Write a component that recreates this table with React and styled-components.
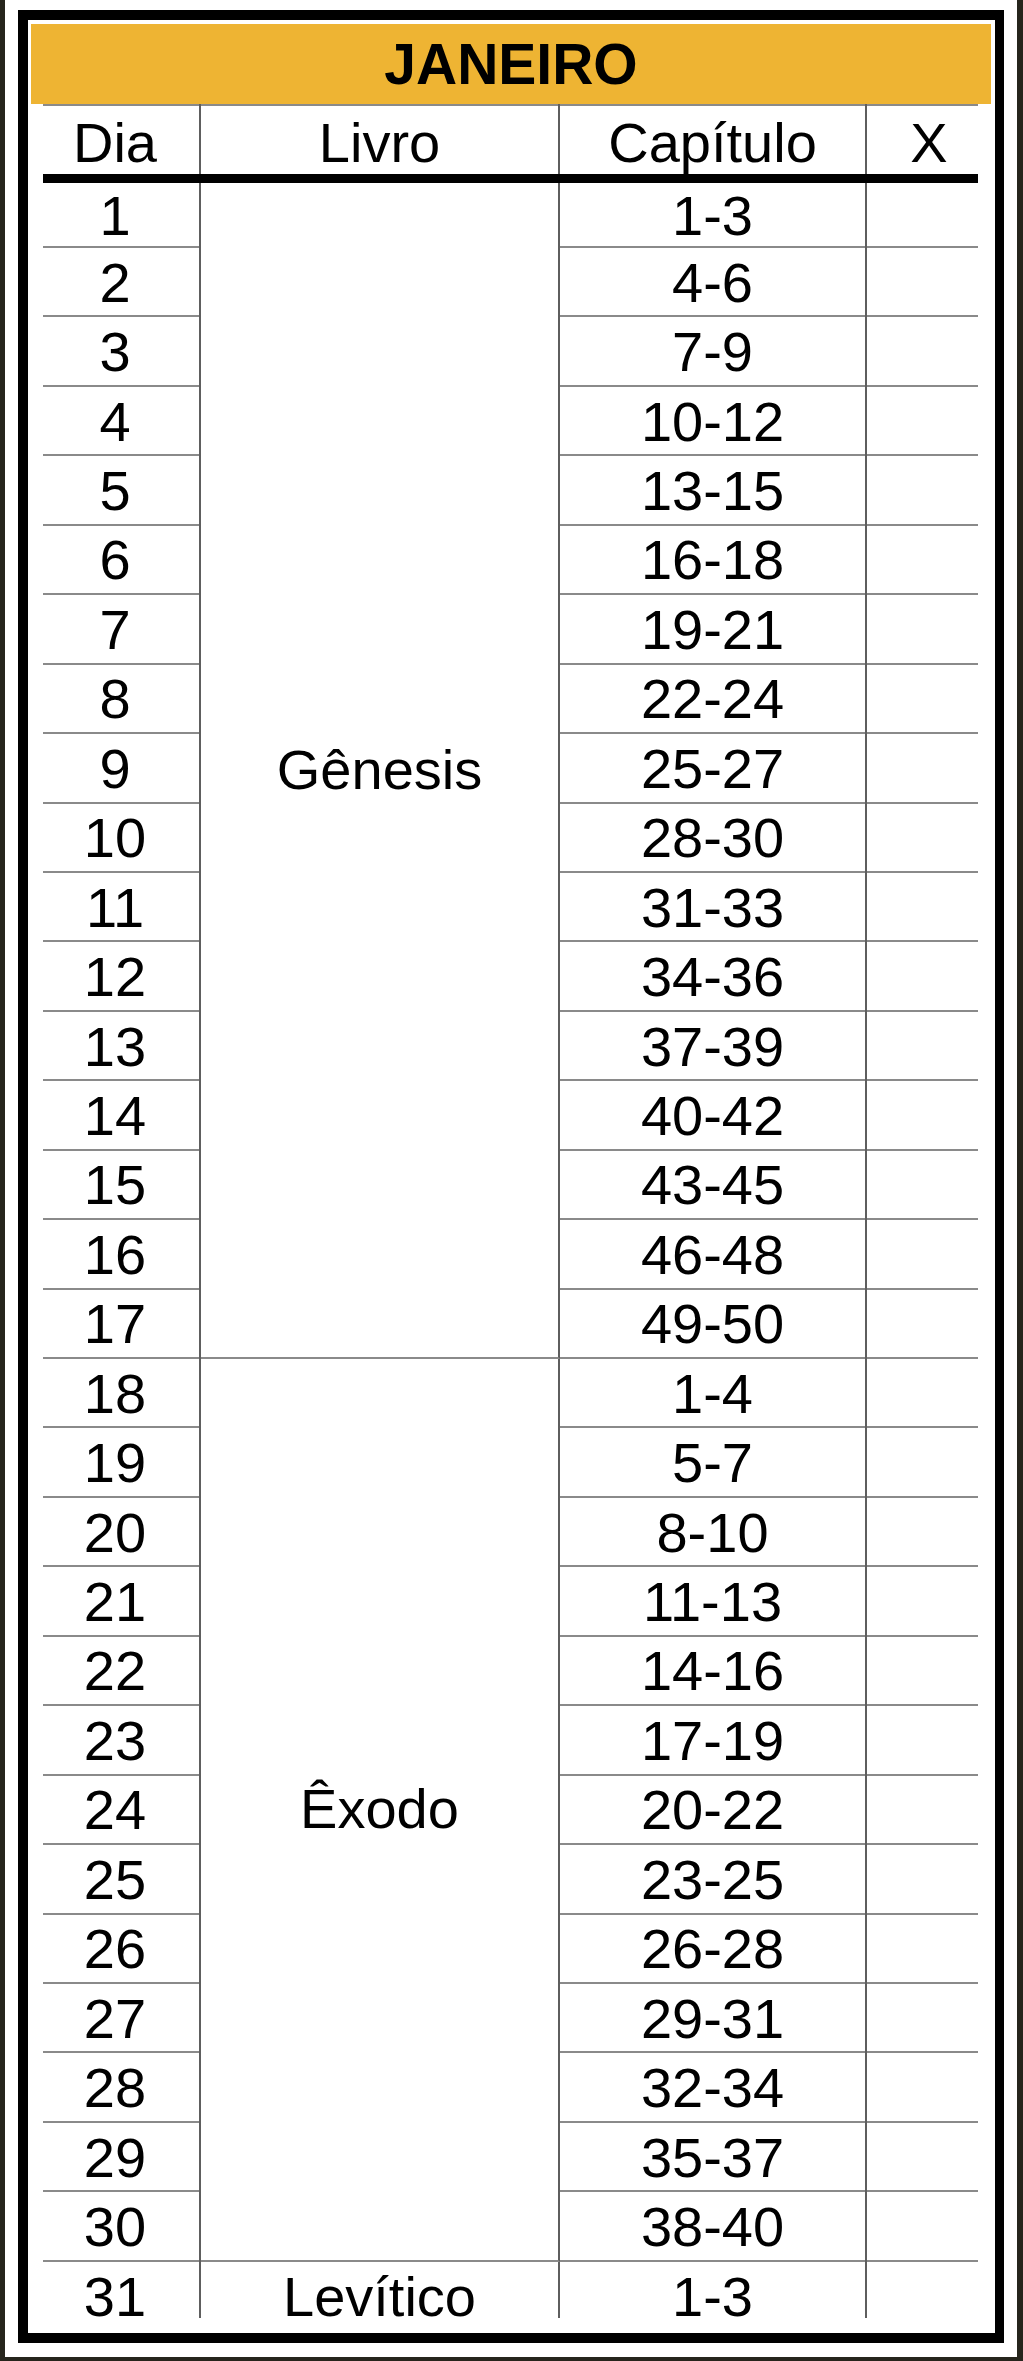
import React from "react";
import styled, { createGlobalStyle } from "styled-components";

const LINE = "#8a8a8a";
const RULE = "#5e5e5e";
const COLUMNS = "170px 359px 307px 124px";

const GlobalStyle = createGlobalStyle`
  html, body {
    margin: 0;
    padding: 0;
    background: #26251c;
  }
  body {
    font-family: "Liberation Sans", Arial, Helvetica, sans-serif;
    color: #000;
  }
`;

const Page = styled.div`
  margin: 0 6px 4px 5px;
  padding: 10px 13px 14px 13px;
  background: #fff;
`;

const Frame = styled.div`
  border: 10px solid #000;
  border-right-width: 9px;
  padding: 4px 4px 15px 3px;
  background: #fff;
`;

const Title = styled.div`
  height: 80px;
  display: flex;
  align-items: center;
  justify-content: center;
  background: #eeb433;
  font-size: 57px;
  font-weight: 700;
  line-height: 1;
`;

// inset horizontal line drawn on a cell's bottom edge
const bottomLine = (inset, last) => {
  if (last) return "none";
  if (inset === "left")
    return `linear-gradient(${LINE}, ${LINE}) right bottom / calc(100% - 12px) 2px no-repeat`;
  if (inset === "right")
    return `linear-gradient(${LINE}, ${LINE}) left bottom / calc(100% - 13px) 2px no-repeat`;
  return `linear-gradient(${LINE}, ${LINE}) left bottom / 100% 2px no-repeat`;
};

const HeadRow = styled.div`
  display: grid;
  grid-template-columns: ${COLUMNS};
  height: 70px;
  background: linear-gradient(${LINE}, ${LINE}) 12px 0 / calc(100% - 25px) 2px
    no-repeat;
`;

const HeadCell = styled.div`
  display: flex;
  align-items: center;
  justify-content: center;
  padding-top: 8px;
  font-size: 56px;
  line-height: 1;
  border-right: ${({ $divider }) => ($divider ? `2px solid ${RULE}` : "none")};
`;

const ThickRule = styled.div`
  height: 9px;
  margin: 0 13px 0 12px;
  background: #000;
`;

const Body = styled.div`
  display: grid;
  grid-template-columns: ${COLUMNS};
  grid-template-rows: 65px repeat(29, 69.45px) 56px;
`;

const Cell = styled.div`
  grid-column: ${({ $col }) => $col};
  grid-row: ${({ $row }) => $row};
  display: flex;
  align-items: center;
  justify-content: center;
  padding-top: ${({ $last }) => ($last ? "14px" : "0")};
  font-size: 56px;
  line-height: 1;
  border-right: ${({ $divider }) => ($divider ? `2px solid ${RULE}` : "none")};
  background: ${({ $inset, $last }) => bottomLine($inset, $last)};
`;

const BookCell = styled.div`
  grid-column: 2;
  grid-row: ${({ $start, $span }) => `${$start} / span ${$span}`};
  display: flex;
  align-items: center;
  justify-content: center;
  padding-top: ${({ $last }) => ($last ? "14px" : "0")};
  font-size: 56px;
  line-height: 1;
  border-right: 2px solid ${RULE};
  border-bottom: ${({ $last }) => ($last ? "none" : `2px solid ${LINE}`)};
`;

const books = [
  { name: "Gênesis", start: 1, span: 17 },
  { name: "Êxodo", start: 18, span: 13 },
  { name: "Levítico", start: 31, span: 1 },
];

const chapters = [
  "1-3", "4-6", "7-9", "10-12", "13-15", "16-18", "19-21", "22-24", "25-27",
  "28-30", "31-33", "34-36", "37-39", "40-42", "43-45", "46-48", "49-50",
  "1-4", "5-7", "8-10", "11-13", "14-16", "17-19", "20-22", "23-25", "26-28",
  "29-31", "32-34", "35-37", "38-40",
  "1-3",
];

const App = () => (
  <>
    <GlobalStyle />
    <Page>
      <Frame>
        <Title>JANEIRO</Title>
        <HeadRow>
          <HeadCell $divider>Dia</HeadCell>
          <HeadCell $divider>Livro</HeadCell>
          <HeadCell $divider>Capítulo</HeadCell>
          <HeadCell>X</HeadCell>
        </HeadRow>
        <ThickRule />
        <Body>
          {chapters.map((ch, i) => {
            const last = i === chapters.length - 1;
            return (
              <React.Fragment key={i}>
                <Cell $col={1} $row={i + 1} $inset="left" $last={last} $divider>
                  {i + 1}
                </Cell>
                <Cell $col={3} $row={i + 1} $last={last} $divider>
                  {ch}
                </Cell>
                <Cell $col={4} $row={i + 1} $inset="right" $last={last} />
              </React.Fragment>
            );
          })}
          {books.map((b) => (
            <BookCell
              key={b.name}
              $start={b.start}
              $span={b.span}
              $last={b.start === chapters.length}
            >
              {b.name}
            </BookCell>
          ))}
        </Body>
      </Frame>
    </Page>
  </>
);

export default App;
